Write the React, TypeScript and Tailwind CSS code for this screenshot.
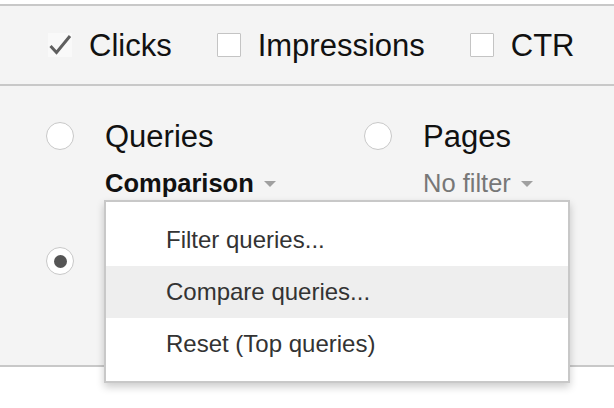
import React from "react";

function CheckBox({ checked }: { checked?: boolean }) {
  if (checked) {
    return (
      <span className="flex h-[24px] w-[24px] items-center justify-center bg-[#f9f9f9]">
        <svg width="24" height="24" viewBox="0 0 24 24">
          <path d="M2.5 13 L8.5 19.5 L22 3" fill="none" stroke="#5f5f5f" strokeWidth="3" />
        </svg>
      </span>
    );
  }
  return <span className="block h-[24px] w-[24px] rounded-[1px] border-[1.5px] border-[#c4c4c4] bg-white" />;
}

function Radio({ selected }: { selected?: boolean }) {
  return (
    <span className="flex h-[28px] w-[28px] shrink-0 items-center justify-center rounded-full border-[1.5px] border-[#c8c8c8] bg-white">
      {selected && <span className="block h-[13px] w-[13px] rounded-full bg-[#555]" />}
    </span>
  );
}

function Caret() {
  return (
    <svg width="12" height="6" viewBox="0 0 12 6" className="ml-[10px]">
      <path d="M0 0 L12 0 L6 6 Z" fill="#a0a0a0" />
    </svg>
  );
}

const metrics = [
  { label: "Clicks", checked: true },
  { label: "Impressions" },
  { label: "CTR" },
];

const menuItems = ["Filter queries...", "Compare queries...", "Reset (Top queries)"];

export default function App() {
  return (
    <div
      className="relative h-[408px] w-[614px] overflow-hidden bg-white pt-[4px] text-[#111]"
      style={{ fontFamily: '"Liberation Sans", Arial, Helvetica, sans-serif' }}
    >
      {/* metric toggles */}
      <div className="flex h-[82px] items-center gap-[45px] border-y-2 border-[#c8c8c8] bg-[#f4f4f4] pl-[48px]">
        {metrics.map((m) => (
          <div key={m.label} className="flex items-center gap-[17px]">
            <CheckBox checked={m.checked} />
            <span className="text-[31px] leading-none">{m.label}</span>
          </div>
        ))}
      </div>

      {/* dimension choices */}
      <div className="h-[281px] border-b-2 border-[#c8c8c8] bg-[#f4f4f4] pl-[46px] pt-[32px]">
        <div className="grid grid-cols-[318px_1fr]">
          <div>
            <div className="flex h-[36px] items-center gap-[31px]">
              <Radio />
              <span className="text-[31px] leading-none">Queries</span>
            </div>
            <div className="ml-[59px] mt-[15px] flex h-[30px] items-center">
              <span className="text-[25.5px] font-bold leading-none">Comparison</span>
              <Caret />
            </div>
          </div>
          <div>
            <div className="flex h-[36px] items-center gap-[31px]">
              <Radio />
              <span className="text-[31px] leading-none">Pages</span>
            </div>
            <div className="ml-[59px] mt-[15px] flex h-[30px] items-center">
              <span className="text-[25.5px] leading-none text-[#777]">No filter</span>
              <Caret />
            </div>
          </div>
        </div>
        <div className="mt-[44px] flex h-[36px] items-center gap-[31px]">
          <Radio selected />
          <span className="text-[31px] leading-none">Dates</span>
        </div>
      </div>

      {/* dropdown menu */}
      <div className="absolute left-[104px] top-[200px] w-[466px] border-2 border-[#c8c8c8] bg-white pb-[11px] pt-[12px] shadow-[0_4px_8px_rgba(0,0,0,0.2)]">
        {menuItems.map((item, i) => (
          <div
            key={item}
            className={`flex h-[52px] items-center pl-[60px] text-[24px] leading-none text-[#333] ${i === 1 ? "bg-[#eeeeee]" : ""}`}
          >
            {item}
          </div>
        ))}
      </div>
    </div>
  );
}
